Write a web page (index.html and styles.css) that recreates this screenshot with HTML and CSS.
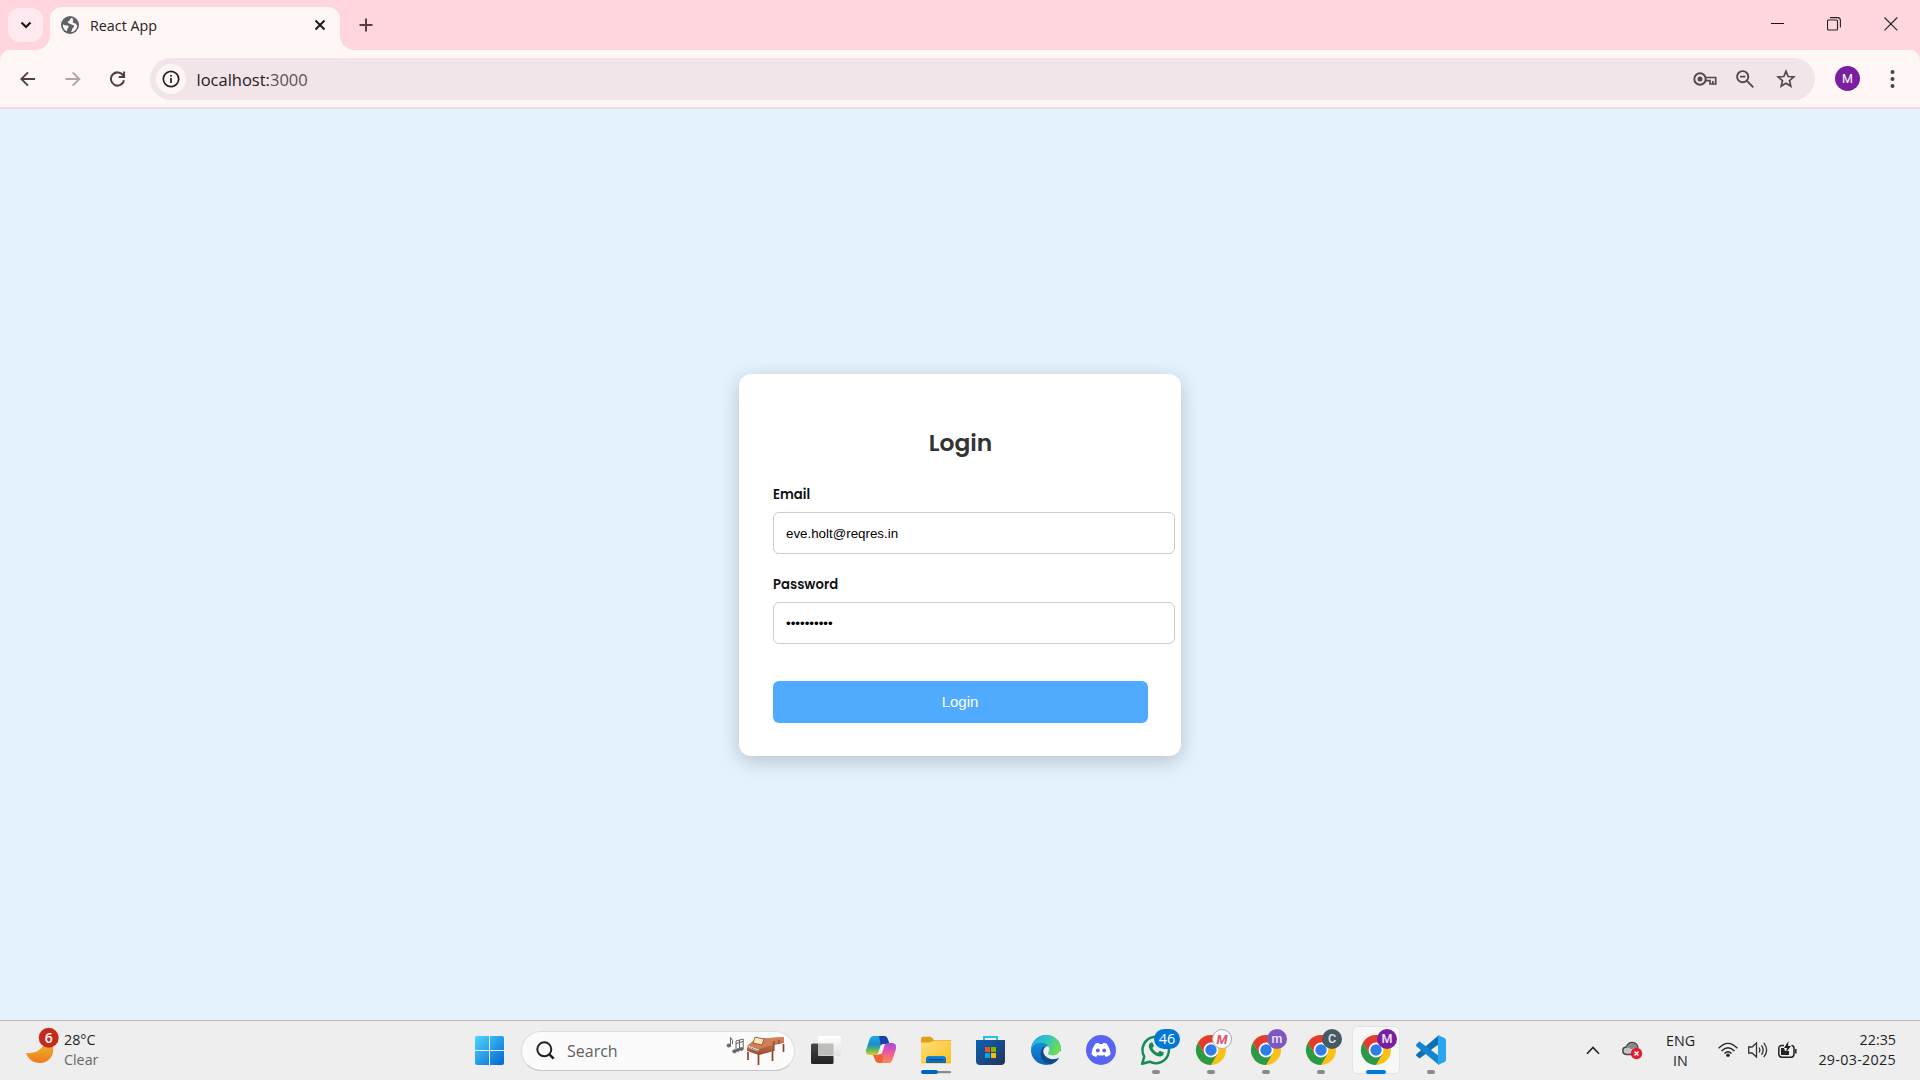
FILE: index.html
```html
<!DOCTYPE html>
<html lang="en">
<head>
<meta charset="utf-8">
<title>React App</title>
<link rel="stylesheet" href="styles.css">
</head>
<body>
<svg class="defs" width="0" height="0" aria-hidden="true">
  <defs>
    <linearGradient id="win" x1="0" y1="0" x2="1" y2="1"><stop offset="0" stop-color="#4fd5ff"/><stop offset="1" stop-color="#0067d0"/></linearGradient>
    <linearGradient id="moon" x1="0" y1="0" x2="0" y2="1"><stop offset="0" stop-color="#e8b32a"/><stop offset="1" stop-color="#f07a1c"/></linearGradient>
    <linearGradient id="dark" x1="0" y1="0" x2="0" y2="1"><stop offset="0" stop-color="#474746"/><stop offset="1" stop-color="#222"/></linearGradient>
    <linearGradient id="light" x1="0" y1="0" x2="0" y2="1"><stop offset="0" stop-color="#fff"/><stop offset="1" stop-color="#e2e2e2"/></linearGradient>
    <linearGradient id="copA" x1="0" y1="0" x2="0" y2="1"><stop offset="0" stop-color="#19a9f0"/><stop offset=".45" stop-color="#1b8fc8"/><stop offset=".75" stop-color="#6cbc5c"/><stop offset="1" stop-color="#f2c822"/></linearGradient>
    <linearGradient id="copB" x1="0" y1="0" x2="0" y2="1"><stop offset="0" stop-color="#a24be0"/><stop offset=".5" stop-color="#ee5b9c"/><stop offset="1" stop-color="#fb8a4a"/></linearGradient>
    <linearGradient id="folder" x1="0" y1="0" x2="1" y2="1"><stop offset="0" stop-color="#ffe07a"/><stop offset="1" stop-color="#fbbd22"/></linearGradient>
    <linearGradient id="folderBlue" x1="0" y1="0" x2="0" y2="1"><stop offset="0" stop-color="#1287dc"/><stop offset="1" stop-color="#0b66b5"/></linearGradient>
    <linearGradient id="store" x1="0" y1="0" x2="1" y2="1"><stop offset="0" stop-color="#0a62b5"/><stop offset="1" stop-color="#25335a"/></linearGradient>
    <linearGradient id="edgeTop" x1="0" y1="0" x2="1" y2=".4"><stop offset="0" stop-color="#2aa6e4"/><stop offset=".5" stop-color="#2fc2c9"/><stop offset="1" stop-color="#68dd55"/></linearGradient>
    <linearGradient id="edgeLow" x1="0" y1="0" x2="0" y2="1"><stop offset="0" stop-color="#1a9be0"/><stop offset="1" stop-color="#0a64b8"/></linearGradient>
    <linearGradient id="piano" x1="0" y1="0" x2="0" y2="1"><stop offset="0" stop-color="#d98a60"/><stop offset="1" stop-color="#9a4a2c"/></linearGradient>
    <g id="chrome">
      <circle r="15" fill="#fbc116"/>
      <path d="M-13 -7.5A15 15 0 0 0 0 15L6.5 3.75L0 0L-6.5 3.75Z" fill="#2b9a48"/>
      <path d="M-13 -7.5A15 15 0 0 1 13 -7.5H0L-6.5 3.75Z" fill="#e33b2e"/>
      <circle r="7.4" fill="#fff"/><circle r="5.7" fill="#2f7de9"/>
    </g>
  </defs>
</svg>

<header class="browser">
  <div class="tabstrip">
    <button class="tab-search" aria-label="Search tabs"><svg width="12" height="8" viewBox="0 0 12 8"><path d="M1.5 1.5L6 6L10.500 1.500" fill="none" stroke="#1f1517" stroke-width="2.200"/></svg></button>
    <div class="tab">
      <svg width="18" height="18" viewBox="0 0 18 18"><circle cx="9" cy="9" r="9" fill="#5f6368"/><path d="M10.300 1.900C8.600 2.800 9.500 4.400 8 5C6.300 5.600 6.600 7.200 8.200 7.400C10 7.600 10.400 8.700 12 9.100C13.600 9.500 13.500 11 12.300 11.600C11 12.300 11.400 14.300 9.900 16.100C13.700 15.700 16.300 12.600 16.200 8.900C14.700 9 15.300 7.200 13.600 7.200C12 7.200 11.400 6.300 12 5C12.500 3.900 11.200 3.300 12.300 2.700ZM1.900 8.200C3.400 9.700 5 9 6.600 9.600C8.500 10.200 7.300 12 6.400 12.600C6 13.400 6.400 14.500 5.700 15.200C3 13.800 1.500 11 1.900 8.200Z" fill="#fff7f6"/></svg>
      <span class="tab-title">React App</span>
      <svg width="12" height="12" viewBox="0 0 12 12"><path d="M1.500 1.500L10.500 10.500M10.500 1.500L1.500 10.500" stroke="#1f1517" stroke-width="1.900"/></svg>
    </div>
    <button class="new-tab" aria-label="New tab"><svg width="14" height="14" viewBox="0 0 14 14"><path d="M7 .5V13.500M.5 7H13.500" stroke="#584046" stroke-width="2"/></svg></button>
    <div class="window-buttons">
      <svg width="13" height="14" viewBox="0 0 13 14"><path d="M0 6.500H13" stroke="#111"/></svg>
      <svg width="14" height="14" viewBox="0 0 14 14"><rect x=".5" y="3" width="10" height="10" rx="1" fill="none" stroke="#222" stroke-width="1.100"/><path d="M3 .6H10.500Q13.400 .6 13.400 3.500V10.500" fill="none" stroke="#222" stroke-width="1.100"/></svg>
      <svg width="14" height="14" viewBox="0 0 14 14"><path d="M.5 .5L13.300 13.300M13.300 .5L.5 13.300" stroke="#222" stroke-width="1.100"/></svg>
    </div>
  </div>
  <div class="toolbar">
    <div class="nav">
      <svg width="16" height="16" viewBox="0 0 16 16"><path d="M15 8H2M8 1.300L1.300 8L8 14.700" fill="none" stroke="#533d42" stroke-width="1.900"/></svg>
      <svg width="16" height="16" viewBox="0 0 16 16"><path d="M.5 8H14M7.700 1.300L14.400 8L7.700 14.700" fill="none" stroke="#b3a3a6" stroke-width="1.900"/></svg>
      <svg width="16" height="16" viewBox="0 0 16 16"><path d="M13.200 4.600A6.600 6.600 0 1 0 14 9.300M14.100 .5V6H8.700" fill="none" stroke="#533d42" stroke-width="2"/></svg>
    </div>
    <div class="omnibox">
      <span class="site-info"><svg width="18" height="18" viewBox="0 0 18 18"><circle cx="9" cy="9" r="7.700" fill="none" stroke="#2b2023" stroke-width="1.700"/><path d="M9 8V13M9 5V6.700" stroke="#2b2023" stroke-width="1.700"/></svg></span>
      <span class="url">localhost:<span class="port">3000</span></span>
      <div class="omni-actions">
        <svg width="24" height="16" viewBox="0 0 24 16"><circle cx="7" cy="8" r="5.700" fill="none" stroke="#54474a" stroke-width="1.900"/><circle cx="7" cy="8" r="2.500" fill="#54474a"/><path d="M12 6.500H22.700V13H17V9.600H12.300M19.800 10V12.500" fill="none" stroke="#54474a" stroke-width="1.700"/></svg>
        <svg class="zoom-icon" width="18" height="18" viewBox="0 0 18 18"><circle cx="6.700" cy="6.700" r="5.600" fill="none" stroke="#54474a" stroke-width="1.900"/><path d="M4 6.700H9.400M10.700 10.700L17.300 17.300" stroke="#54474a" stroke-width="1.800"/></svg>
        <svg width="20" height="20" viewBox="0 0 20 20"><path d="M10 2.300L12.200 7.500L17.800 8L13.500 11.700L14.800 17.200L10 14.300L5.200 17.200L6.500 11.700L2.200 8L7.800 7.500Z" fill="none" stroke="#54474a" stroke-width="1.700"/></svg>
      </div>
    </div>
    <span class="avatar">M</span>
    <svg class="kebab" width="5" height="18" viewBox="0 0 5 18"><g fill="#533d42"><circle cx="2.500" cy="2" r="2"/><circle cx="2.500" cy="9" r="2"/><circle cx="2.500" cy="16" r="2"/></g></svg>
  </div>
</header>

<main class="page">
  <form class="card">
    <h2 class="card-title">Login</h2>
    <label class="label" for="email">Email</label>
    <input class="input" id="email" type="email" value="eve.holt@reqres.in">
    <label class="label" for="password">Password</label>
    <input class="input" id="password" type="password" value="cityslicka">
    <button class="submit" type="button">Login</button>
  </form>
</main>

<footer class="taskbar">
  <div class="weather">
    <svg width="36" height="40" viewBox="24 1026 36 40"><path d="M26 1053C33 1054 41 1051 44 1044L53 1046C55 1056 48 1063 40 1063C33 1063 28 1059 26 1053Z" fill="url(#moon)"/><circle cx="48.700" cy="1037.700" r="10" fill="#c42b1c"/><text x="48.700" y="1043" class="count">6</text></svg>
    <div class="two-line"><span>28°C</span><span class="muted">Clear</span></div>
  </div>

  <div class="dock">
    <svg class="start" width="29" height="29" viewBox="0 0 29 29"><path d="M2 0H14V14H0V2Q0 0 2 0ZM15 0H27Q29 0 29 2V14H15ZM0 15H14V29H2Q0 29 0 27ZM15 15H29V27Q29 29 27 29H15Z" fill="url(#win)"/></svg>
    <div class="search">
      <svg width="19" height="19" viewBox="0 0 19 19"><circle cx="8.300" cy="8.300" r="7" fill="none" stroke="#222" stroke-width="2"/><path d="M13.300 13.300L17.700 17.700" stroke="#222" stroke-width="2.600"/></svg>
      <span class="search-text">Search</span>
      <svg width="60" height="30" viewBox="0 0 60 30">
        <g fill="#666" stroke="#666" stroke-width="1"><ellipse cx="2.800" cy="9.500" rx="1.800" ry="1.500"/><path d="M4.500 9.500V1.500Q7.500 4 6.500 8" fill="none"/><ellipse cx="8.500" cy="15.300" rx="1.800" ry="1.500"/><ellipse cx="15.500" cy="13" rx="1.600" ry="1.400"/><path d="M10 15V5L17.200 3V13M10 7.500L17.200 5.500M13.500 4V13.500" fill="none"/><ellipse cx="12" cy="14" rx="1.500" ry="1.300"/></g>
        <path d="M22 16V24M32.500 18V29M46.500 14V25M57.500 8V16" stroke="#8c4429" stroke-width="1.700"/>
        <path d="M21 10L30 3L58 1V7L48 9V15L33 19L21 15Z" fill="url(#piano)"/>
        <path d="M30 3L58 1L57 3.500L47 5L46 9L33 13L22 9Z" fill="#cf8058"/>
        <path d="M22 9.500L33 13.500L32 15.500L21 11.500Z" fill="#eee4da"/><path d="M22 11L32 14.700" stroke="#4a3027" stroke-dasharray="1 1"/>
        <path d="M29 1L38 3L36 9L27 7Z" fill="#fbe6b9" stroke="#7a4a25" stroke-width=".8"/><path d="M48 5V15M53 4V8" stroke="#7a3925"/>
      </svg>
    </div>
    <div class="apps">
      <svg class="app" viewBox="-27 -29 55 59"><rect x="-15" y="-6.500" width="22.500" height="20.500" rx="1.500" fill="url(#dark)"/><rect x="-8" y="-14" width="23" height="20" rx="1.500" fill="url(#light)"/><path d="M-8 -6.500H7.500V5.500H-8Z" fill="#bdbdbb"/></svg>
      <svg class="app" viewBox="-27 -29 55 59">
        <path d="M-7 -14H3Q6 -14 7 -10L8.500 -6H3Q0 -6 -1 -2L-3 4Q-5 6 -7 5H-11Q-16 5 -15 0L-12 -9Q-11 -14 -7 -14Z" fill="url(#copA)"/>
        <path d="M-2 -14H3Q6 -14 7 -10L8.500 -6H3Q1 -6 0 -4Z" fill="#1740a8"/>
        <path d="M8 13H-2Q-5 13 -6 10L-7.500 5H-4Q-1 5 0 1L3 -5Q4 -7 8 -7H11Q16 -7 15 -1L12 8Q11 13 8 13Z" fill="url(#copB)"/>
        <path d="M-8 5H-4Q-1 5 0 2L2 8Q2 13 -1 13Q-5 13 -6 9Z" fill="#ee6234"/><path d="M-3 4L0 -5Q1 -6 4 -6L1 3Q0 5 -3 4Z" fill="#f6f3f8"/>
      </svg>
      <svg class="app" viewBox="-27 -29 55 59"><path d="M-15 -11Q-15 -13.300 -13 -13.300H-5L-2 -10H15V0H-15Z" fill="#dfa113"/><path d="M-15 -7.500H-6L-2 -9.500H15V13.500H-15Z" fill="url(#folder)"/><path d="M-10 13V9Q-10 6 -7 6H7Q10 6 10 9V13Z" fill="url(#folderBlue)"/><path d="M-7 9.700H7" stroke="#084d91" stroke-width="1.200"/><rect x="-14" y="21" width="29" height="2.300" rx="1" fill="#8a8a8a"/><rect x="-15" y="20" width="17" height="4" rx="2" fill="#0067c0"/></svg>
      <svg class="app" viewBox="-27 -29 55 59"><path d="M-7 -9V-13H6V-9" fill="none" stroke="#2bbcf0" stroke-width="2"/><path d="M-15 -10H14V11Q14 15 10 15H-11Q-15 15 -15 11Z" fill="url(#store)"/><path fill="#f25022" d="M-6-3H-1V2H-6Z"/><path fill="#7fba00" d="M0-3H5V2H0Z"/><path fill="#00a4ef" d="M-6 3H-1V8H-6Z"/><path fill="#ffb900" d="M0 3H5V8H0Z"/></svg>
      <svg class="app" viewBox="-27 -29 55 59">
        <circle r="15" fill="url(#edgeLow)"/>
        <path d="M-14.800 -2C-13.500 -10 -7 -15 0 -15C9 -15 15 -8.500 15 -2C15 3 11 5.500 6.500 5.500C3 5.500 1.500 4 2 3C4 1 4 -2 2 -4.500C-2 -9 -11 -8 -14.800 -2Z" fill="url(#edgeTop)"/>
        <path d="M-3 -3C-8 3 -5 13 4 14.500C8 14 12 10.500 13 7.500C9 10 3 9 0 5.500C-2 3 -2.500 0 -1 -3Z" fill="#114a8b"/>
        <path d="M2 -4C-3 -3 -4 2 -1 5.500C3 10.500 10 9.500 13 7.500L18 3L14 1C12 5 8 6 4.500 5C2 4.500 1.500 3.500 2.500 2.500C4 0 4 -2 2 -4Z" fill="#eee"/>
      </svg>
      <svg class="app" viewBox="-27 -29 55 59"><circle r="15" fill="#5865f2"/><path d="M-5.500 -6.500L-2.500 -7.300L-1.700 -6H1.700L2.500 -7.300L5.500 -6.500Q9.500 -1 9.500 4.500Q7.500 6.300 4.800 7L3.500 5Q0 6 -3.500 5L-4.800 7Q-7.500 6.300 -9.500 4.500Q-9.500 -1 -5.500 -6.500Z" fill="#fff"/><ellipse cx="-3.200" cy=".5" rx="1.900" ry="2.100" fill="#5865f2"/><ellipse cx="3.200" cy=".5" rx="1.900" ry="2.100" fill="#5865f2"/></svg>
      <svg class="app" viewBox="-27 -29 55 59"><path d="M-13.800 13.800L-11.800 6.500A13.200 13.200 0 1 1 -6.500 11.700Z" fill="none" stroke="#178a56" stroke-width="2.500" stroke-linejoin="round"/><path d="M-5 -7.500C-8.500 -5.500 -7.500 -1.500 -4 2.500C0 6.800 5.500 8 7.500 4.500L7.800 2.500L3.800 .8L1.800 3C-.8 2 -2.500 .2 -3.600 -2L-2 -4L-3.500 -7.500Z" fill="#178a56"/><rect x="-2" y="-21" width="26" height="20" rx="10" fill="#0078d7"/><text x="11" y="-5.800" class="count count-light">46</text><rect class="dot" x="-4" y="20" width="8" height="4" rx="2"/></svg>
      <svg class="app" viewBox="-27 -29 55 59"><use href="#chrome"/><circle cx="11" cy="-11" r="9.500" fill="#fbfafa" stroke="#aaa"/><text x="11" y="-6.300" class="count brand">M</text><rect class="dot" x="-4" y="20" width="8" height="4" rx="2"/></svg>
      <svg class="app" viewBox="-27 -29 55 59"><use href="#chrome"/><circle cx="11" cy="-11" r="10" fill="#7e57c2"/><text x="11" y="-7.500" class="count profile">m</text><rect class="dot" x="-4" y="20" width="8" height="4" rx="2"/></svg>
      <svg class="app" viewBox="-27 -29 55 59"><use href="#chrome"/><circle cx="11" cy="-11" r="10" fill="#455a64"/><text x="11" y="-6.800" class="count profile">C</text><rect class="dot" x="-4" y="20" width="8" height="4" rx="2"/></svg>
      <svg class="app" viewBox="-27 -29 55 59"><rect x="-23.500" y="-23.500" width="47" height="47" rx="5" fill="#f8f8f8" stroke="#e3e3e3"/><use href="#chrome"/><circle cx="11" cy="-11" r="10" fill="#7b1fa2"/><text x="11" y="-6.800" class="count profile">M</text><rect x="-10" y="20" width="20" height="4" rx="2" fill="#0078d7"/></svg>
      <svg class="app" viewBox="-27 -29 55 59"><path d="M8 -15V-6L-11.500 8.500L-15 5.500L-14.500 4Z" fill="#0e6fb5"/><path d="M-11.500 -8.500L8 6V15L-15 -4L-14.500 -6Z" fill="#1484cf"/><path d="M7 -15L13.500 -12Q15 -11.500 15 -10V10Q15 11.500 13.500 12L7 15Z" fill="#2aa5f2"/><rect class="dot" x="-4" y="20" width="8" height="4" rx="2"/></svg>
    </div>
  </div>

  <div class="tray">
    <svg width="14" height="9" viewBox="0 0 14 9"><path d="M1 7.800L7 1.500L13 7.800" fill="none" stroke="#222" stroke-width="1.600"/></svg>
    <svg class="cloud" width="21" height="19" viewBox="0 0 21 19"><path d="M5 13.500Q.8 13.500 .8 9.500Q1 6 4.500 6Q6 1.500 10 1.500Q14 1.500 15.500 5L16 8L9 13.500Z" fill="#c4c4c4" stroke="#444" stroke-width="1.500"/><path d="M5 6Q8 1.500 11 2Q15 3 15.500 7L9 8Z" fill="#888"/><circle cx="14.500" cy="12.500" r="5.700" fill="#e0202e"/><path d="M12.500 10.500L16.500 14.500M16.500 10.500L12.500 14.500" stroke="#fff" stroke-width="1.400"/></svg>
    <div class="two-line lang"><span>ENG</span><span>IN</span></div>
    <div class="status">
      <svg width="20" height="16" viewBox="0 0 20 16"><g fill="none" stroke="#222" stroke-width="1.400"><path d="M.6 6.300Q10 -3.500 19.400 6.300"/><path d="M3.500 9Q10 2.500 16.500 9"/><path d="M6.500 11.500Q10 8 13.500 11.500"/></g><circle cx="10" cy="13.200" r="1.800" fill="#222"/></svg>
      <svg width="20" height="18" viewBox="0 0 20 18"><g fill="none" stroke="#333" stroke-width="1.300"><path d="M.7 6H4L8.500 2V16L4 12H.7Z"/><path d="M11 6.500Q12.700 9 11 11.500M13.500 4.300Q16.800 9 13.500 13.700M15.800 1.800Q21.500 9 15.800 16.200"/></g></svg>
      <svg width="19" height="18" viewBox="0 0 19 18"><path d="M6 4.500H4Q.8 4.500 .8 7.500V13Q.8 16.200 4 16.200H13Q16 16.200 16 13V7.500Q16 4.500 13.500 4.500M17.800 8V12.500" fill="none" stroke="#222" stroke-width="1.500"/><path d="M3 7H6L7 10H11V14H3Z" fill="#222"/><path d="M10.500 0L6 7H9L8 11.500L13 5H10Z" fill="#222"/></svg>
    </div>
    <div class="two-line clock"><span>22:35</span><span class="date">29-03-2025</span></div>
  </div>
</footer>
</body>
</html>
```

FILE: styles.css
```css
* { box-sizing: border-box; }

body {
  margin: 0;
  width: 1920px;
  height: 1080px;
  display: flex;
  flex-direction: column;
  overflow: hidden;
  font-family: "Segoe UI", "Open Sans", "Noto Sans", sans-serif;
  color: #1f1f1f;
}

svg { display: block; flex: none; }
.defs { position: absolute; }
button { border: 0; padding: 0; background: none; }

/* Browser frame */
.browser {
  height: 109px;
  background: #ffd6de;
}

.tabstrip {
  display: flex;
  height: 50px;
  padding-left: 8px;
}

.tab-search {
  display: grid;
  place-items: center;
  width: 35px;
  height: 34px;
  margin-top: 8px;
  border-radius: 12px;
  background: #ffebef;
}

.tab {
  position: relative;
  display: flex;
  align-items: center;
  width: 290px;
  height: 43px;
  margin: 7px 0 0 7px;
  padding: 0 14px 7px 11px;
  border-radius: 12px 12px 0 0;
  background: #fff7f6;
}

.tab::before,
.tab::after {
  content: "";
  position: absolute;
  bottom: 0;
  width: 14px;
  height: 14px;
}

.tab::before {
  left: -14px;
  background: radial-gradient(circle at 0 0, transparent 13.5px, #fff7f6 14px);
}

.tab::after {
  right: -14px;
  background: radial-gradient(circle at 100% 0, transparent 13.5px, #fff7f6 14px);
}

.tab-title {
  flex: 1;
  padding: 1px 0 0 11px;
  font-size: 14.3px;
  line-height: 21px;
  color: #2b2023;
}

.new-tab {
  display: grid;
  place-items: center;
  width: 34px;
  height: 34px;
  margin: 8px 0 0 9px;
}

.window-buttons {
  display: flex;
  align-items: center;
  gap: 43px;
  height: 34px;
  margin: 7px 22px 0 auto;
}

.toolbar {
  display: flex;
  align-items: center;
  height: 59px;
  padding: 0 25px 0 20px;
  border-bottom: 2px solid #f5dce1;
  border-radius: 10px 10px 0 0;
  background: #fff7f6;
}

.nav {
  display: flex;
  gap: 29px;
  width: 130px;
}

.omnibox {
  display: flex;
  align-items: center;
  width: 1665px;
  height: 42px;
  padding: 0 19px 0 6px;
  border-radius: 21px;
  background: #f1e5e9;
}

.site-info {
  display: grid;
  place-items: center;
  width: 30px;
  height: 30px;
  border-radius: 50%;
  background: #fff7f6;
}

.url {
  padding: 2px 0 0 10.5px;
  font-size: 16.5px;
  line-height: 24px;
  color: #1f1a1c;
}

.port { color: #5c5053; }

.omni-actions {
  display: flex;
  align-items: center;
  gap: 19px;
  margin-left: auto;
}

.zoom-icon { margin-right: 3px; }

.avatar {
  width: 25px;
  height: 25px;
  margin-left: 20px;
  border-radius: 50%;
  background: #7b1fa2;
  color: #fff;
  font: 12.5px/26px Roboto, sans-serif;
  text-align: center;
}

.kebab { margin-left: auto; }

/* Login page */
.page {
  display: flex;
  justify-content: center;
  align-items: center;
  height: 911px;
  padding-top: 1px;
  background: #e3f2fd;
}

.card {
  width: 442px;
  height: 382px;
  padding: 54px 33px 32px 34px;
  border-radius: 12px;
  background: #fff;
  box-shadow: 0 5px 20px rgba(0, 0, 0, .2);
}

.card-title {
  margin: 0 0 27px;
  font: 600 23.4px/30px Poppins, Inter, sans-serif;
  color: #333;
  text-align: center;
}

.label {
  display: block;
  margin-bottom: 7px;
  font: 600 13.2px/20px Poppins, Inter, sans-serif;
  font-feature-settings: "cv11";
  color: #111;
}

.input {
  display: block;
  width: 402px;
  height: 42px;
  margin-bottom: 21px;
  padding: 0 12px;
  border: 1px solid #ccc;
  border-radius: 6px;
  background: #fff;
  color: #000;
  font: 13.33px "Liberation Sans", Arial, sans-serif;
}

.submit {
  display: block;
  width: 375px;
  height: 42px;
  margin-top: 37px;
  padding-right: 1px;
  border-radius: 6px;
  background: #50abff;
  color: #fff;
  font: 15px/42px "Liberation Sans", Arial, sans-serif;
}

/* Taskbar */
.taskbar {
  display: flex;
  align-items: center;
  height: 60px;
  border-top: 1px solid #b8bbbe;
  background: #eee;
}

.weather {
  display: flex;
  align-items: center;
  width: 475px;
  padding: 0 0 2px 24px;
}

.weather svg { margin: -7px 4px 0 0; }

.two-line {
  display: flex;
  flex-direction: column;
  font-size: 14.3px;
  line-height: 20px;
}

.muted { color: #666; }

.dock {
  display: flex;
  align-items: center;
}

.search {
  display: flex;
  align-items: center;
  width: 274px;
  height: 40px;
  margin: 0 4px 0 17px;
  padding: 0 8px 0 14px;
  border: 1px solid #dedede;
  border-bottom-color: #c4c4c4;
  border-radius: 20px;
  background: #fbfbfb;
}

.search-text {
  flex: 1;
  padding-left: 12px;
  font-size: 16px;
  line-height: 24px;
  color: #5f5f5f;
}

.apps { display: flex; }
.app { width: 55px; height: 59px; }
.dot { fill: #8a8a8a; }

.count {
  font-size: 14px;
  font-weight: 600;
  fill: #fff;
  text-anchor: middle;
}

.count-light { font-size: 14.5px; font-weight: 400; }
.profile { font: 500 12.5px Roboto, sans-serif; fill: #f0e8f6; }
.brand { font: italic 700 13px Roboto, sans-serif; fill: #e0526d; }

.tray {
  display: flex;
  align-items: center;
  margin-left: auto;
  padding-right: 24px;
}

.cloud { margin-left: 22px; }
.lang { width: 75px; align-items: center; }
.status { display: flex; align-items: center; gap: 10px; padding-bottom: 1px; }
.clock { width: 99px; align-items: flex-end; padding-bottom: 2px; }
.date { letter-spacing: .3px; }
```
